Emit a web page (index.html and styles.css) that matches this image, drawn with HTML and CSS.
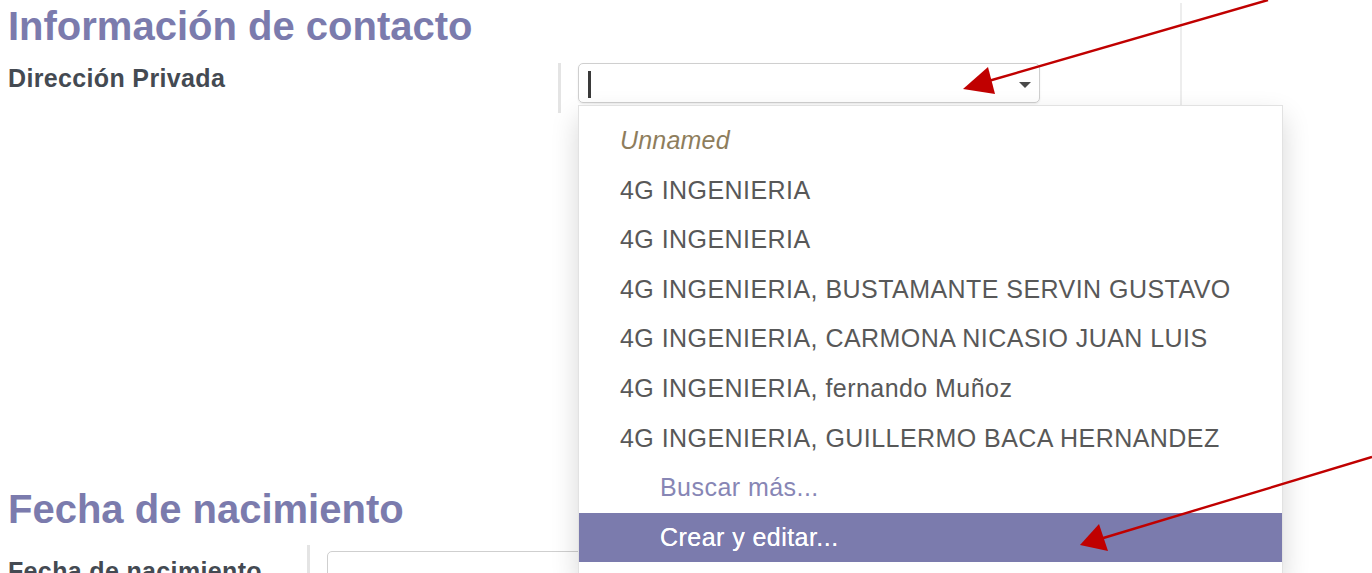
FILE: index.html
```html
<!DOCTYPE html>
<html lang="es">
<head>
<meta charset="utf-8">
<title>Información de contacto</title>
<link rel="stylesheet" href="styles.css">
</head>
<body>
<div class="sheet">
  <section class="group group-contact">
    <h2 class="sep-title">Información de contacto</h2>
    <div class="field-row">
      <div class="label-cell wide"><label class="field-label">Dirección Privada</label></div>
      <div class="value-cell">
        <div class="m2o">
          <div class="m2o-input"><span class="cursor"></span><span class="caret"></span></div>
          <ul class="m2o-dropdown">
            <li class="opt unnamed">Unnamed</li>
            <li class="opt">4G INGENIERIA</li>
            <li class="opt">4G INGENIERIA</li>
            <li class="opt">4G INGENIERIA, BUSTAMANTE SERVIN GUSTAVO</li>
            <li class="opt">4G INGENIERIA, CARMONA NICASIO JUAN LUIS</li>
            <li class="opt">4G INGENIERIA, fernando Muñoz</li>
            <li class="opt">4G INGENIERIA, GUILLERMO BACA HERNANDEZ</li>
            <li class="opt action">Buscar más...</li>
            <li class="opt action active">Crear y editar...</li>
          </ul>
        </div>
      </div>
    </div>
  </section>
  <section class="group group-birth">
    <h2 class="sep-title">Fecha de nacimiento</h2>
    <div class="field-row">
      <div class="label-cell narrow"><label class="field-label">Fecha de nacimiento</label></div>
      <div class="value-cell">
        <div class="date-input"></div>
      </div>
    </div>
  </section>
</div>
<svg class="annotations" width="1372" height="573" viewBox="0 0 1372 573">
  <line x1="1268" y1="0" x2="985" y2="82" stroke="#c00000" stroke-width="2.4"/>
  <polygon points="963,89 988,67 995,94" fill="#c00000"/>
  <line x1="1372" y1="457" x2="1100" y2="539" stroke="#c00000" stroke-width="2.4"/>
  <polygon points="1080,545 1099,524 1108,551" fill="#c00000"/>
</svg>
</body>
</html>
```
FILE: styles.css
```css
* { box-sizing: border-box; }
html, body { margin: 0; padding: 0; background: #fff; }
body {
  font-family: "Liberation Sans", Arial, sans-serif;
  width: 1372px;
  height: 573px;
  overflow: hidden;
  position: relative;
}
.sheet {
  width: 1182px;
  min-height: 573px;
  padding-left: 8px;
  border-right: 2px solid #ededed;
}
.sep-title {
  margin: 3px 0 0;
  font-size: 40px;
  line-height: 46px;
  font-weight: 700;
  color: #7b7bad;
}
.field-row {
  display: flex;
  margin-top: 14px;
  height: 50px;
}
.label-cell {
  flex: none;
  border-right: 3px solid #e4e4e4;
}
.label-cell.wide { width: 553px; }
.label-cell.narrow { width: 302px; }
.field-label {
  display: block;
  font-size: 25px;
  line-height: 30px;
  font-weight: 700;
  letter-spacing: 0.35px;
  color: #444a52;
}
.value-cell {
  flex: 1;
  padding-left: 17px;
}
.m2o {
  position: relative;
  width: 462px;
}
.m2o-input {
  height: 40px;
  border: 1px solid #cfcfcf;
  border-radius: 5px;
  box-shadow: 0 1px 2px rgba(0,0,0,0.08);
  display: flex;
  align-items: center;
  justify-content: space-between;
  padding: 0 8px 0 9px;
}
.cursor {
  width: 3px;
  height: 27px;
  background: #3a3a3a;
  margin-top: 3px;
}
.caret {
  width: 0;
  height: 0;
  border-left: 6px solid transparent;
  border-right: 6px solid transparent;
  border-top: 6px solid #4a4a4a;
  margin-top: 4px;
}
.m2o-dropdown {
  position: absolute;
  top: 42px;
  left: 0;
  width: 705px;
  margin: 0;
  padding: 10px 0 11px;
  list-style: none;
  background: #fff;
  border: 1px solid #e2e2e2;
  box-shadow: 0 12px 26px rgba(0,0,0,0.16);
  z-index: 2;
}
.opt {
  height: 49.6px;
  line-height: 49.6px;
  padding-left: 41px;
  font-size: 25px;
  letter-spacing: 0.45px;
  color: #585858;
  white-space: nowrap;
}
.opt.unnamed {
  font-style: italic;
  color: #8e7d5c;
  letter-spacing: 0.2px;
}
.opt.action {
  padding-left: 81px;
  color: #8786b5;
}
.opt.active {
  background: #7b7bad;
  color: #fff;
  text-shadow: 0 0 0.6px #fff;
}
.group-birth {
  margin-top: 373px;
}
.group-birth .field-row {
  margin-top: 13px;
}
.group-birth .label-cell {
  height: 60px;
}
.group-birth .field-label {
  padding-top: 11px;
}
.date-input {
  height: 40px;
  margin-top: 6px;
  width: 600px;
  border: 1px solid #cfcfcf;
  border-radius: 5px;
}
.annotations {
  position: absolute;
  left: 0;
  top: 0;
  pointer-events: none;
  z-index: 5;
}
```
